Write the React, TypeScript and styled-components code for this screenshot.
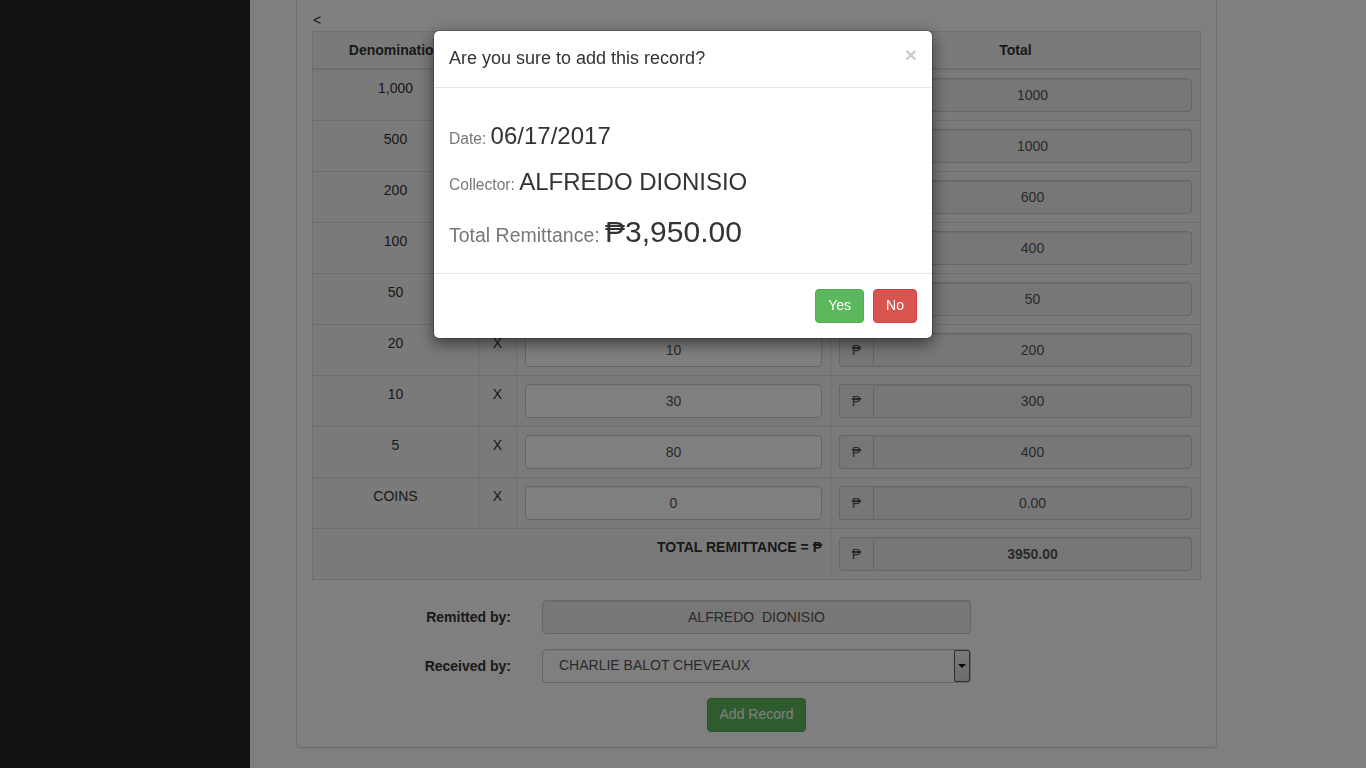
import styled, { createGlobalStyle } from 'styled-components';

const GlobalStyle = createGlobalStyle`
  * {
    box-sizing: border-box;
  }

  body {
    margin: 0;
    overflow: hidden;
    background: #fff;
    color: #333;
    font-family: 'Liberation Sans', Arial, Helvetica, sans-serif;
    font-size: 14px;
    line-height: 1.428571;
  }
`;

const rows = [
  { denom: '1,000', qty: '1', total: '1000' },
  { denom: '500', qty: '2', total: '1000' },
  { denom: '200', qty: '3', total: '600' },
  { denom: '100', qty: '4', total: '400' },
  { denom: '50', qty: '1', total: '50' },
  { denom: '20', qty: '10', total: '200' },
  { denom: '10', qty: '30', total: '300' },
  { denom: '5', qty: '80', total: '400' },
  { denom: 'COINS', qty: '0', total: '0.00' },
];

const App = () => {
  return (
    <>
      <GlobalStyle />
      <Shell>
        <Sidebar />
        <Main>
          <Panel>
            <BackLink>&lt;</BackLink>
            <Table>
              <colgroup>
                <col style={{ width: 166 }} />
                <col style={{ width: 38 }} />
                <col style={{ width: 314 }} />
                <col style={{ width: 370 }} />
              </colgroup>
              <thead>
                <tr>
                  <Th>Denomination</Th>
                  <Th></Th>
                  <Th>Quantity</Th>
                  <Th>Total</Th>
                </tr>
              </thead>
              <tbody>
                {rows.map((row) => (
                  <tr key={row.denom}>
                    <Td>{row.denom}</Td>
                    <Td>X</Td>
                    <Td>
                      <Input defaultValue={row.qty} />
                    </Td>
                    <Td>
                      <InputGroup>
                        <Addon>₱</Addon>
                        <GroupInput readOnly defaultValue={row.total} />
                      </InputGroup>
                    </Td>
                  </tr>
                ))}
                <tr>
                  <TotalLabel colSpan={3}>TOTAL REMITTANCE = ₱</TotalLabel>
                  <Td>
                    <InputGroup>
                      <Addon>₱</Addon>
                      <GroupInput readOnly $bold defaultValue="3950.00" />
                    </InputGroup>
                  </Td>
                </tr>
              </tbody>
            </Table>

            <Form>
              <FormRow>
                <Label>Remitted by:</Label>
                <Input readOnly $readonly defaultValue="ALFREDO  DIONISIO" />
              </FormRow>
              <FormRow>
                <Label>Received by:</Label>
                <Select>
                  <span>CHARLIE BALOT CHEVEAUX</span>
                  <ArrowBox>
                    <Caret />
                  </ArrowBox>
                </Select>
              </FormRow>
              <ButtonRow>
                <Button $variant="success">Add Record</Button>
              </ButtonRow>
            </Form>
          </Panel>
        </Main>
      </Shell>

      <Backdrop />
      <ModalWrap>
        <Dialog>
          <ModalHeader>
            <ModalTitle>Are you sure to add this record?</ModalTitle>
            <Close>×</Close>
          </ModalHeader>
          <ModalBody>
            <Detail $size={24}>
              <small>Date: </small>06/17/2017
            </Detail>
            <Detail $size={24}>
              <small>Collector: </small>ALFREDO DIONISIO
            </Detail>
            <Detail $size={30}>
              <small>Total Remittance: </small>₱3,950.00
            </Detail>
          </ModalBody>
          <ModalFooter>
            <Button $variant="success">Yes</Button>
            <Button $variant="danger">No</Button>
          </ModalFooter>
        </Dialog>
      </ModalWrap>
    </>
  );
};

export default App;

const Shell = styled.div`
  display: flex;
  min-height: 100vh;
`;

const Sidebar = styled.aside`
  width: 250px;
  flex-shrink: 0;
  background: #222;
`;

const Main = styled.main`
  flex: 1;
  padding: 0 0 20px 46px;
`;

const Panel = styled.section`
  width: 921px;
  padding: 10px 15px 15px;
  background: #fff;
  border: 1px solid #ddd;
  border-top: none;
  border-radius: 0 0 4px 4px;
  box-shadow: 0 1px 1px rgba(0, 0, 0, 0.05);
`;

const BackLink = styled.div`
  line-height: 20px;
  padding-left: 1px;
  margin-bottom: 1px;
`;

const Table = styled.table`
  width: 888px;
  table-layout: fixed;
  border-collapse: collapse;
  background: #f5f5f5;
  border: 1px solid #ddd;
`;

const Th = styled.th`
  padding: 8px;
  line-height: 20px;
  text-align: center;
  font-weight: bold;
  border: 1px solid #ddd;
  border-bottom: 2px solid #ddd;
  white-space: nowrap;
  overflow: hidden;
`;

const Td = styled.td`
  padding: 8px;
  line-height: 20px;
  text-align: center;
  vertical-align: top;
  border: 1px solid #ddd;
`;

const TotalLabel = styled(Td)`
  text-align: right;
  font-weight: bold;
`;

const Input = styled.input<{ $readonly?: boolean }>`
  display: block;
  width: 100%;
  height: 34px;
  padding: 6px 12px;
  font-family: inherit;
  font-size: 14px;
  line-height: 1.428571;
  color: #555;
  text-align: center;
  background: ${(p) => (p.$readonly ? '#eee' : '#fff')};
  border: 1px solid #ccc;
  border-radius: 4px;
  box-shadow: inset 0 1px 1px rgba(0, 0, 0, 0.075);
  outline: none;
`;

const InputGroup = styled.div`
  display: flex;
  height: 34px;
`;

const Addon = styled.span`
  width: 34px;
  padding: 6px 0;
  font-size: 14px;
  line-height: 20px;
  color: #555;
  text-align: center;
  background: #eee;
  border: 1px solid #ccc;
  border-right: none;
  border-radius: 4px 0 0 4px;
`;

const GroupInput = styled.input<{ $bold?: boolean }>`
  flex: 1;
  min-width: 0;
  height: 34px;
  padding: 6px 12px;
  font-family: inherit;
  font-size: 14px;
  font-weight: ${(p) => (p.$bold ? 'bold' : 'normal')};
  color: #555;
  text-align: center;
  background: #eee;
  border: 1px solid #ccc;
  border-radius: 0 4px 4px 0;
  box-shadow: inset 0 1px 1px rgba(0, 0, 0, 0.075);
  outline: none;
`;

const Form = styled.div`
  margin-top: 20px;
`;

const FormRow = styled.div`
  display: grid;
  grid-template-columns: 200px 429px;
  column-gap: 30px;
  align-items: center;
  margin-bottom: 15px;
`;

const Label = styled.label`
  text-align: right;
  font-weight: bold;
  padding-top: 2px;
  padding-right: 1px;
`;

const Select = styled.div`
  display: flex;
  align-items: stretch;
  justify-content: space-between;
  height: 34px;
  padding-left: 16px;
  color: #555;
  background: #fff;
  border: 1px solid #ccc;
  border-radius: 4px;
  box-shadow: inset 0 1px 1px rgba(0, 0, 0, 0.075);

  span {
    align-self: center;
  }
`;

const ArrowBox = styled.div`
  display: flex;
  align-items: center;
  justify-content: center;
  width: 16px;
  background: linear-gradient(#f4f4f4, #dadada);
  border: 1px solid #5a5a5a;
  border-radius: 2px;
`;

const Caret = styled.span`
  width: 0;
  height: 0;
  border-left: 4px solid transparent;
  border-right: 4px solid transparent;
  border-top: 4px solid #111;
`;

const ButtonRow = styled.div`
  width: 429px;
  margin-left: 230px;
  text-align: center;
`;

const Button = styled.button<{ $variant: 'success' | 'danger' }>`
  height: 34px;
  padding: 6px 12px;
  font-family: inherit;
  font-size: 14px;
  line-height: 1.428571;
  color: #fff;
  background: ${(p) => (p.$variant === 'success' ? '#5cb85c' : '#d9534f')};
  border: 1px solid ${(p) => (p.$variant === 'success' ? '#4cae4c' : '#d43f3a')};
  border-radius: 4px;
  cursor: pointer;
`;

const Backdrop = styled.div`
  position: fixed;
  inset: 0;
  z-index: 1040;
  background: rgba(0, 0, 0, 0.5);
`;

const ModalWrap = styled.div`
  position: fixed;
  inset: 0;
  z-index: 1050;
  overflow: hidden;
`;

const Dialog = styled.div`
  width: 500px;
  margin: 30px auto;
  background: #fff;
  background-clip: padding-box;
  border: 1px solid rgba(0, 0, 0, 0.2);
  border-radius: 6px;
  box-shadow: 0 5px 15px rgba(0, 0, 0, 0.5);
`;

const ModalHeader = styled.div`
  display: flex;
  justify-content: space-between;
  align-items: flex-start;
  padding: 15px;
  border-bottom: 1px solid #e5e5e5;
`;

const ModalTitle = styled.h4`
  margin: 0;
  font-size: 18px;
  font-weight: 500;
  line-height: 1.428571;
`;

const Close = styled.button`
  margin-top: -2px;
  padding: 0;
  font-family: inherit;
  font-size: 21px;
  font-weight: bold;
  line-height: 1;
  color: #000;
  text-shadow: 0 1px 0 #fff;
  opacity: 0.2;
  background: transparent;
  border: 0;
  cursor: pointer;
`;

const ModalBody = styled.div`
  padding: 15px;
`;

const Detail = styled.h3<{ $size: number }>`
  margin: 20px 0 10px;
  font-size: ${(p) => p.$size}px;
  font-weight: 500;
  line-height: 1.1;
  color: #333;

  small {
    font-size: 65%;
    font-weight: normal;
    line-height: 1;
    color: #777;
  }
`;

const ModalFooter = styled.div`
  display: flex;
  justify-content: flex-end;
  gap: 9px;
  padding: 15px;
  border-top: 1px solid #e5e5e5;
`;
